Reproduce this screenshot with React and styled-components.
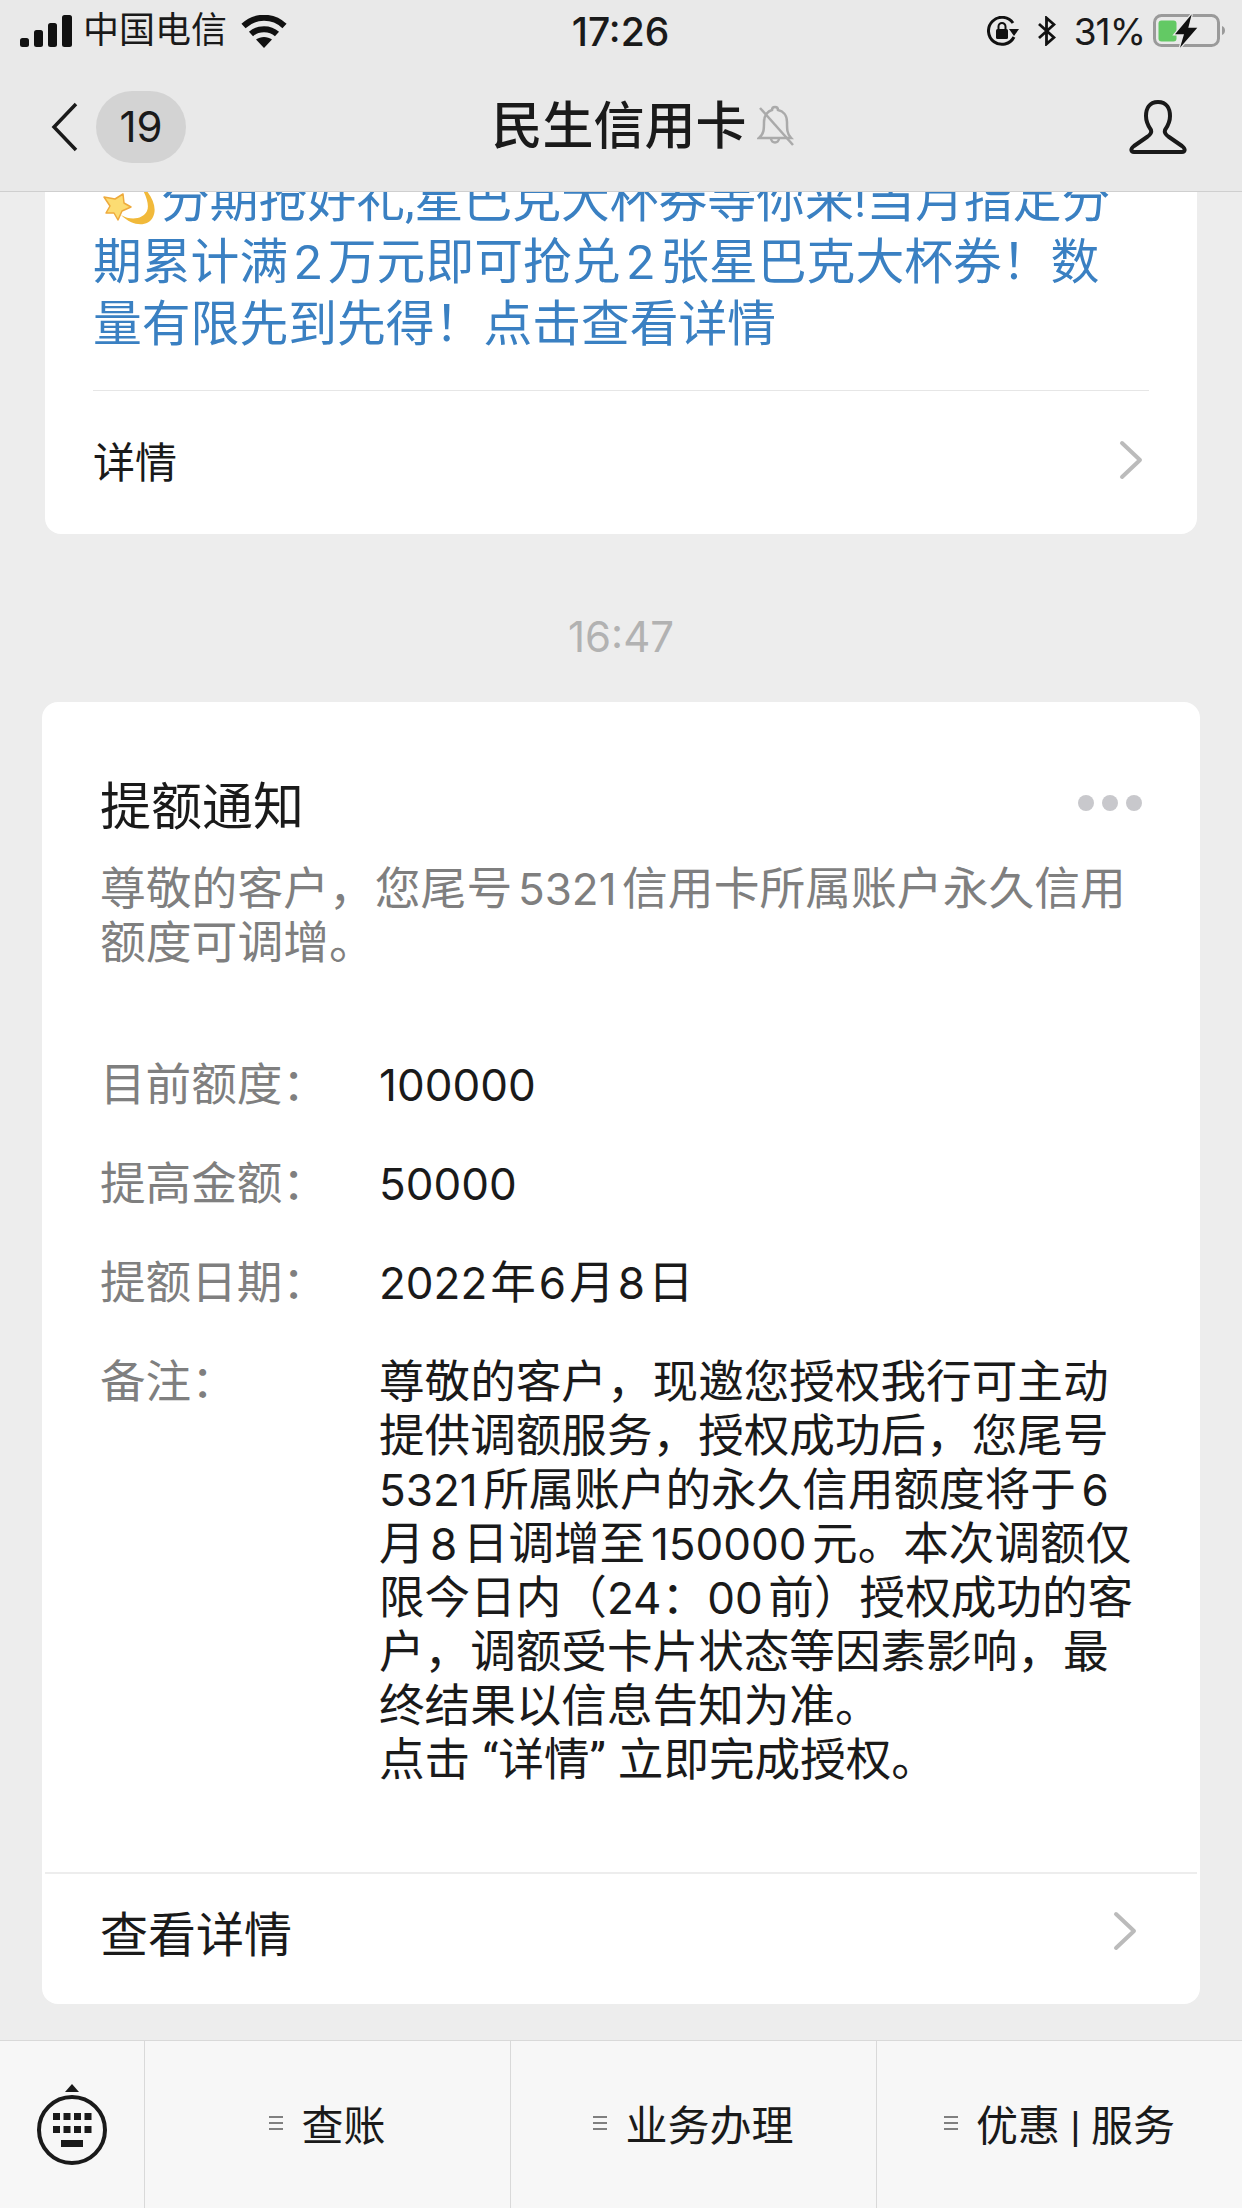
import React from 'react';
import styled, { createGlobalStyle } from 'styled-components';

const Global = createGlobalStyle`
   html, body {
      margin: 0;
      padding: 0;
      background: #ededed;
   }
   body {
      font-family: Roboto, "Noto Sans CJK SC", sans-serif;
      text-autospace: normal;
   }
`;

const Page = styled.div`
   width: 1242px;
   height: 2208px;
   display: flex;
   flex-direction: column;
   overflow: hidden;
   color: #1a1a1a;
`;

const Top = styled.div`
   height: 191px;
   flex: none;
   position: relative;
   z-index: 2;
   background: #e9e9e9;
   border-bottom: 1px solid #cfcfcf;
`;

const Status = styled.div`
   height: 62px;
   padding: 0 15px 0 20px;
   display: grid;
   grid-template-columns: minmax(0, 1fr) auto minmax(0, 1fr);
   align-items: center;
`;

const StatusSide = styled.div`
   display: flex;
   align-items: center;
   gap: ${p => p.$gap}px;
   justify-content: ${p => (p.$right ? 'flex-end' : 'flex-start')};
`;

const Carrier = styled.span`
   font-size: 36px;
   line-height: 40px;
   margin-left: -3px;
`;

const Clock = styled.span`
   font-family: Inter, sans-serif;
   font-size: 39px;
   font-weight: 500;
   margin-right: 6px;
`;

const Percent = styled.span`
   font-family: Inter, sans-serif;
   font-size: 37px;
   letter-spacing: -1px;
   margin-right: -10px;
`;

const NavBar = styled.div`
   height: 129px;
   display: grid;
   grid-template-columns: minmax(0, 1fr) auto minmax(0, 1fr);
   align-items: center;
   padding: 0 55px 0 51px;
`;

const NavLeft = styled.div`
   display: flex;
   align-items: center;
   gap: 18px;
`;

const Badge = styled.div`
   width: 90px;
   height: 72px;
   border-radius: 36px;
   background: #d3d3d3;
   display: flex;
   align-items: center;
   justify-content: center;
   font-family: Inter, sans-serif;
   font-size: 42px;
`;

const NavTitle = styled.div`
   font-size: 51px;
   font-weight: 500;
   line-height: 60px;
   position: relative;
`;

const NavRight = styled.div`
   display: flex;
   justify-content: flex-end;
`;

const Scroll = styled.div`
   flex: 1;
   min-height: 0;
   overflow: hidden;
`;

const PromoCard = styled.div`
   margin: -22px 45px 0;
   padding: 0 48px 0 48px;
   background: #fff;
   border-radius: 0 0 16px 16px;
`;

const PromoText = styled.div`
   font-size: 48.8px;
   line-height: 62px;
   color: #3a80c2;
   padding-bottom: 34px;
   border-bottom: 1px solid #e6e6e6;
   white-space: nowrap;
`;

const Dizzy = styled.svg`
   vertical-align: -10px;
   margin-right: 4px;
`;

const LinkRow = styled.div`
   height: ${p => p.$height}px;
   display: flex;
   align-items: center;
   justify-content: space-between;
   font-size: ${p => p.$size}px;
   padding-right: ${p => p.$inset}px;
   padding-bottom: ${p => p.$lift}px;
   box-sizing: border-box;
`;

const Time = styled.div`
   height: 168px;
   box-sizing: border-box;
   padding-top: 36px;
   display: flex;
   align-items: center;
   justify-content: center;
   font-family: Inter, sans-serif;
   font-size: 42px;
   color: #b2b2b2;
`;

const NoticeCard = styled.div`
   margin: 0 42px;
   height: 1302px;
   background: #fff;
   border-radius: 16px;
   display: flex;
   flex-direction: column;
`;

const NoticeBody = styled.div`
   flex: 1;
   padding: 69px 58px 0 58px;
`;

const TitleRow = styled.div`
   display: flex;
   align-items: center;
   justify-content: space-between;
   height: 74px;
`;

const NoticeTitle = styled.div`
   font-size: 51px;
   line-height: 74px;
`;

const Dots = styled.div`
   display: flex;
   gap: 8px;
   margin: 0 0 10px;
`;

const Dot = styled.i`
   width: 16px;
   height: 16px;
   border-radius: 50%;
   background: #c8c8cc;
`;

const Desc = styled.div`
   margin-top: 18px;
   font-size: 45.8px;
   line-height: 54px;
   color: #7f7f7f;
   white-space: nowrap;
`;

const Fields = styled.div`
   margin-top: 88px;
   display: flex;
   flex-direction: column;
   gap: 45px;
`;

const Field = styled.div`
   display: grid;
   grid-template-columns: 279px 1fr;
   font-size: 45.6px;
   line-height: 54px;
`;

const FieldLabel = styled.div`
   color: #7f7f7f;
`;

const FieldValue = styled.div`
   color: #1a1a1a;
   white-space: nowrap;
`;

const Num = styled.span`
   font-family: Inter, sans-serif;
   font-size: 44px;
   line-height: 1;
`;

const DateText = styled.span`
   text-autospace: no-autospace;
`;

const DateNum = styled(Num)`
   margin: 0 3px;
   &:first-child {
      margin-left: 0;
   }
`;

const QuoteOpen = styled.span`
   margin-left: 12px;
`;

const QuoteClose = styled.span`
   margin-right: 12px;
`;

const NoticeFoot = styled.div`
   margin: 0 3px;
   border-top: 2px solid #ededed;
   padding: 0 58px 0 55px;
`;

const Bottom = styled.div`
   height: 167px;
   flex: none;
   background: #f7f7f7;
   border-top: 1px solid #d9d9d9;
   display: grid;
   grid-template-columns: 144px 366px 366px 1fr;
`;

const Keyboard = styled.div`
   display: flex;
   align-items: center;
   justify-content: center;
`;

const Tab = styled.div`
   border-left: 1px solid #d9d9d9;
   display: flex;
   align-items: center;
   justify-content: center;
   gap: 18px;
   font-size: 42px;
   padding-bottom: 4px;
`;

const TabIcon = styled.span`
   width: 14px;
   display: flex;
   flex-direction: column;
   gap: 4px;
`;

const TabLine = styled.i`
   height: 2px;
   background: #808080;
`;

const Chevron = ({ color, size = 40 }) => (
   <svg width={size * 0.6} height={size} viewBox="0 0 24 40" fill="none">
      <path d="M3 3 L21 20 L3 37" stroke={color} strokeWidth="4" strokeLinecap="round" strokeLinejoin="round" />
   </svg>
);

function Signal() {
   return (
      <svg width="52" height="32" viewBox="0 0 52 32">
         <rect x="0" y="23" width="9" height="9" rx="2.5" fill="#111" />
         <rect x="14" y="15" width="9" height="17" rx="2.5" fill="#111" />
         <rect x="28" y="8" width="9" height="24" rx="2.5" fill="#111" />
         <rect x="42" y="0" width="10" height="32" rx="2.5" fill="#111" />
      </svg>
   );
}

function Wifi() {
   return (
      <svg width="46" height="33" viewBox="0 0 46 33" fill="none" stroke="#111" strokeWidth="6">
         <path d="M2.5 11 C14 0 32 0 43.5 11" />
         <path d="M10 19 C17 12.5 29 12.5 36 19" />
         <path d="M23 33 L15 24.5 C19.5 21 26.5 21 31 24.5 Z" fill="#111" stroke="none" />
      </svg>
   );
}

function RotationLock() {
   return (
      <svg width="32" height="30" viewBox="0 0 32 30" fill="none">
         <path d="M27 21 A13.5 13.5 0 1 1 26 7" stroke="#111" strokeWidth="3" />
         <path d="M22 13 L32 13 L27 20 Z" fill="#111" />
         <rect x="9" y="13" width="12" height="10" rx="1.5" fill="#111" />
         <path d="M11.5 13 V10.5 A3.5 3.5 0 0 1 18.5 10.5 V13" stroke="#111" strokeWidth="2" />
      </svg>
   );
}

function Bluetooth() {
   return (
      <svg width="19" height="30" viewBox="0 0 19 30" fill="none" stroke="#111" strokeWidth="2.8">
         <path d="M2 8 L17 21.5 L9.5 28 V2 L17 8.5 L2 22" />
      </svg>
   );
}

function Battery() {
   return (
      <svg width="74" height="34" viewBox="0 0 74 34" fill="none">
         <rect x="1.5" y="1.5" width="64" height="30" rx="7" stroke="#9a9a9a" strokeWidth="3" />
         <rect x="5.5" y="6.5" width="18" height="21" rx="3" fill="#63c964" />
         <path d="M69 12 C73 13 73 20 69 21 Z" fill="#9a9a9a" />
         <path d="M38.7 0.3 L22 20.3 L31 20.3 L27 33.7 L44.3 13.7 L35.3 13.7 Z" fill="#111" stroke="#e9e9e9" strokeWidth="2.5" paintOrder="stroke" />
      </svg>
   );
}

const Bell = styled.svg`
   position: absolute;
   left: 266px;
   top: 8px;
`;

function MutedBell() {
   return (
      <Bell width="38" height="42" viewBox="0 0 38 42" fill="none" stroke="#aaa" strokeWidth="2.5">
         <path d="M2 33 C7 29 7 24 7 17 C7 10 11 6 15 5 C15 1 21 1 21 5 C26 6 30 10 30 17 C30 24 30 29 34 33 Z" />
         <path d="M14 33 C14 39 22 39 22 33" />
         <path d="M3 3 L36 40" />
      </Bell>
   );
}

function Person() {
   return (
      <svg width="58" height="54" viewBox="0 0 58 54" fill="none" stroke="#1a1a1a" strokeWidth="4" strokeLinejoin="round">
         <path d="M29 2 C20 2 17 9 17 16 C17 23 20 27 22 30 C23 33 21 35 18 37 L5 46 C1 49 2 52 5 52 H53 C56 52 57 49 53 46 L40 37 C37 35 35 33 36 30 C38 27 41 23 41 16 C41 9 38 2 29 2 Z" />
      </svg>
   );
}

function DizzyStar() {
   return (
      <Dizzy width="64" height="50" viewBox="0 0 64 50">
         <path d="M46 6 C58 16 65 30 60 40 C55 50 40 50 28 38 C38 44 50 42 54 34 C57 27 52 16 46 6 Z" fill="#f1b93a" />
         <path d="M11 20 L22 22 L30 17 L31 26 L38 30 L29 34 L25 43 L21 36 L13 36 L17 29 Z" fill="#fcdc72" stroke="#eeaa3c" strokeWidth="1.5" strokeLinejoin="round" />
      </Dizzy>
   );
}

function KeyboardIcon() {
   const keys = [];
   for (let r = 0; r < 2; r++) {
      for (let c = 0; c < 4; c++) {
         keys.push(<rect key={`${r}-${c}`} x={17 + c * 10.5} y={29 + r * 13} width="7" height="7" fill="#1a1a1a" />);
      }
   }
   return (
      <svg width="72" height="82" viewBox="0 0 72 82">
         <path d="M36 0 L43 8 H29 Z" fill="#1a1a1a" />
         <circle cx="36" cy="46" r="33" fill="none" stroke="#1a1a1a" strokeWidth="4" />
         {keys}
         <rect x="25" y="56" width="22" height="7" fill="#1a1a1a" />
      </svg>
   );
}

function TabItem({ label }) {
   return (
      <Tab>
         <TabIcon>
            <TabLine />
            <TabLine />
            <TabLine />
         </TabIcon>
         <span>{label}</span>
      </Tab>
   );
}

function Row({ label, children }) {
   return (
      <Field>
         <FieldLabel>{label}</FieldLabel>
         <FieldValue>{children}</FieldValue>
      </Field>
   );
}

export default function App() {
   return (
      <Page>
         <Global />
         <Top>
            <Status>
               <StatusSide $gap={14}>
                  <Signal />
                  <Carrier>中国电信</Carrier>
                  <Wifi />
               </StatusSide>
               <Clock>17:26</Clock>
               <StatusSide $right $gap={18}>
                  <RotationLock />
                  <Bluetooth />
                  <Percent>31%</Percent>
                  <Battery />
               </StatusSide>
            </Status>
            <NavBar>
               <NavLeft>
                  <svg width="27" height="50" viewBox="0 0 27 50" fill="none">
                     <path d="M25 2 L3 25 L25 48" stroke="#1a1a1a" strokeWidth="3.5" />
                  </svg>
                  <Badge>19</Badge>
               </NavLeft>
               <NavTitle>
                  民生信用卡
                  <MutedBell />
               </NavTitle>
               <NavRight>
                  <Person />
               </NavRight>
            </NavBar>
         </Top>
         <Scroll>
            <PromoCard>
               <PromoText>
                  <DizzyStar />分期抢好礼,星巴克大杯券等你来!当月指定分<br />
                  期累计满2万元即可抢兑2张星巴克大杯券！数<br />
                  量有限先到先得！点击查看详情
               </PromoText>
               <LinkRow $size={42} $height={143} $inset={6} $lift={6}>
                  详情
                  <Chevron color="#bbb" />
               </LinkRow>
            </PromoCard>
            <Time>16:47</Time>
            <NoticeCard>
               <NoticeBody>
                  <TitleRow>
                     <NoticeTitle>提额通知</NoticeTitle>
                     <Dots>
                        <Dot />
                        <Dot />
                        <Dot />
                     </Dots>
                  </TitleRow>
                  <Desc>尊敬的客户，您尾号<Num>5321</Num>信用卡所属账户永久信用<br />额度可调增。</Desc>
                  <Fields>
                     <Row label="目前额度："><Num>100000</Num></Row>
                     <Row label="提高金额："><Num>50000</Num></Row>
                     <Row label="提额日期：">
                        <DateText><DateNum>2022</DateNum>年<DateNum>6</DateNum>月<DateNum>8</DateNum>日</DateText>
                     </Row>
                     <Row label="备注：">
                        尊敬的客户，现邀您授权我行可主动<br />
                        提供调额服务，授权成功后，您尾号<br />
                        <Num>5321</Num>所属账户的永久信用额度将于<Num>6</Num><br />
                        月<Num>8</Num>日调增至<Num>150000</Num>元。本次调额仅<br />
                        限今日内（<Num>24</Num>：<Num>00</Num>前）授权成功的客<br />
                        户，调额受卡片状态等因素影响，最<br />
                        终结果以信息告知为准。<br />
                        点击<QuoteOpen>“</QuoteOpen>详情<QuoteClose>”</QuoteClose>立即完成授权。
                     </Row>
                  </Fields>
               </NoticeBody>
               <NoticeFoot>
                  <LinkRow $size={48} $height={130} $inset={2} $lift={16}>
                     查看详情
                     <Chevron color="#bbb" />
                  </LinkRow>
               </NoticeFoot>
            </NoticeCard>
         </Scroll>
         <Bottom>
            <Keyboard>
               <KeyboardIcon />
            </Keyboard>
            <TabItem label="查账" />
            <TabItem label="业务办理" />
            <TabItem label="优惠 | 服务" />
         </Bottom>
      </Page>
   );
}
